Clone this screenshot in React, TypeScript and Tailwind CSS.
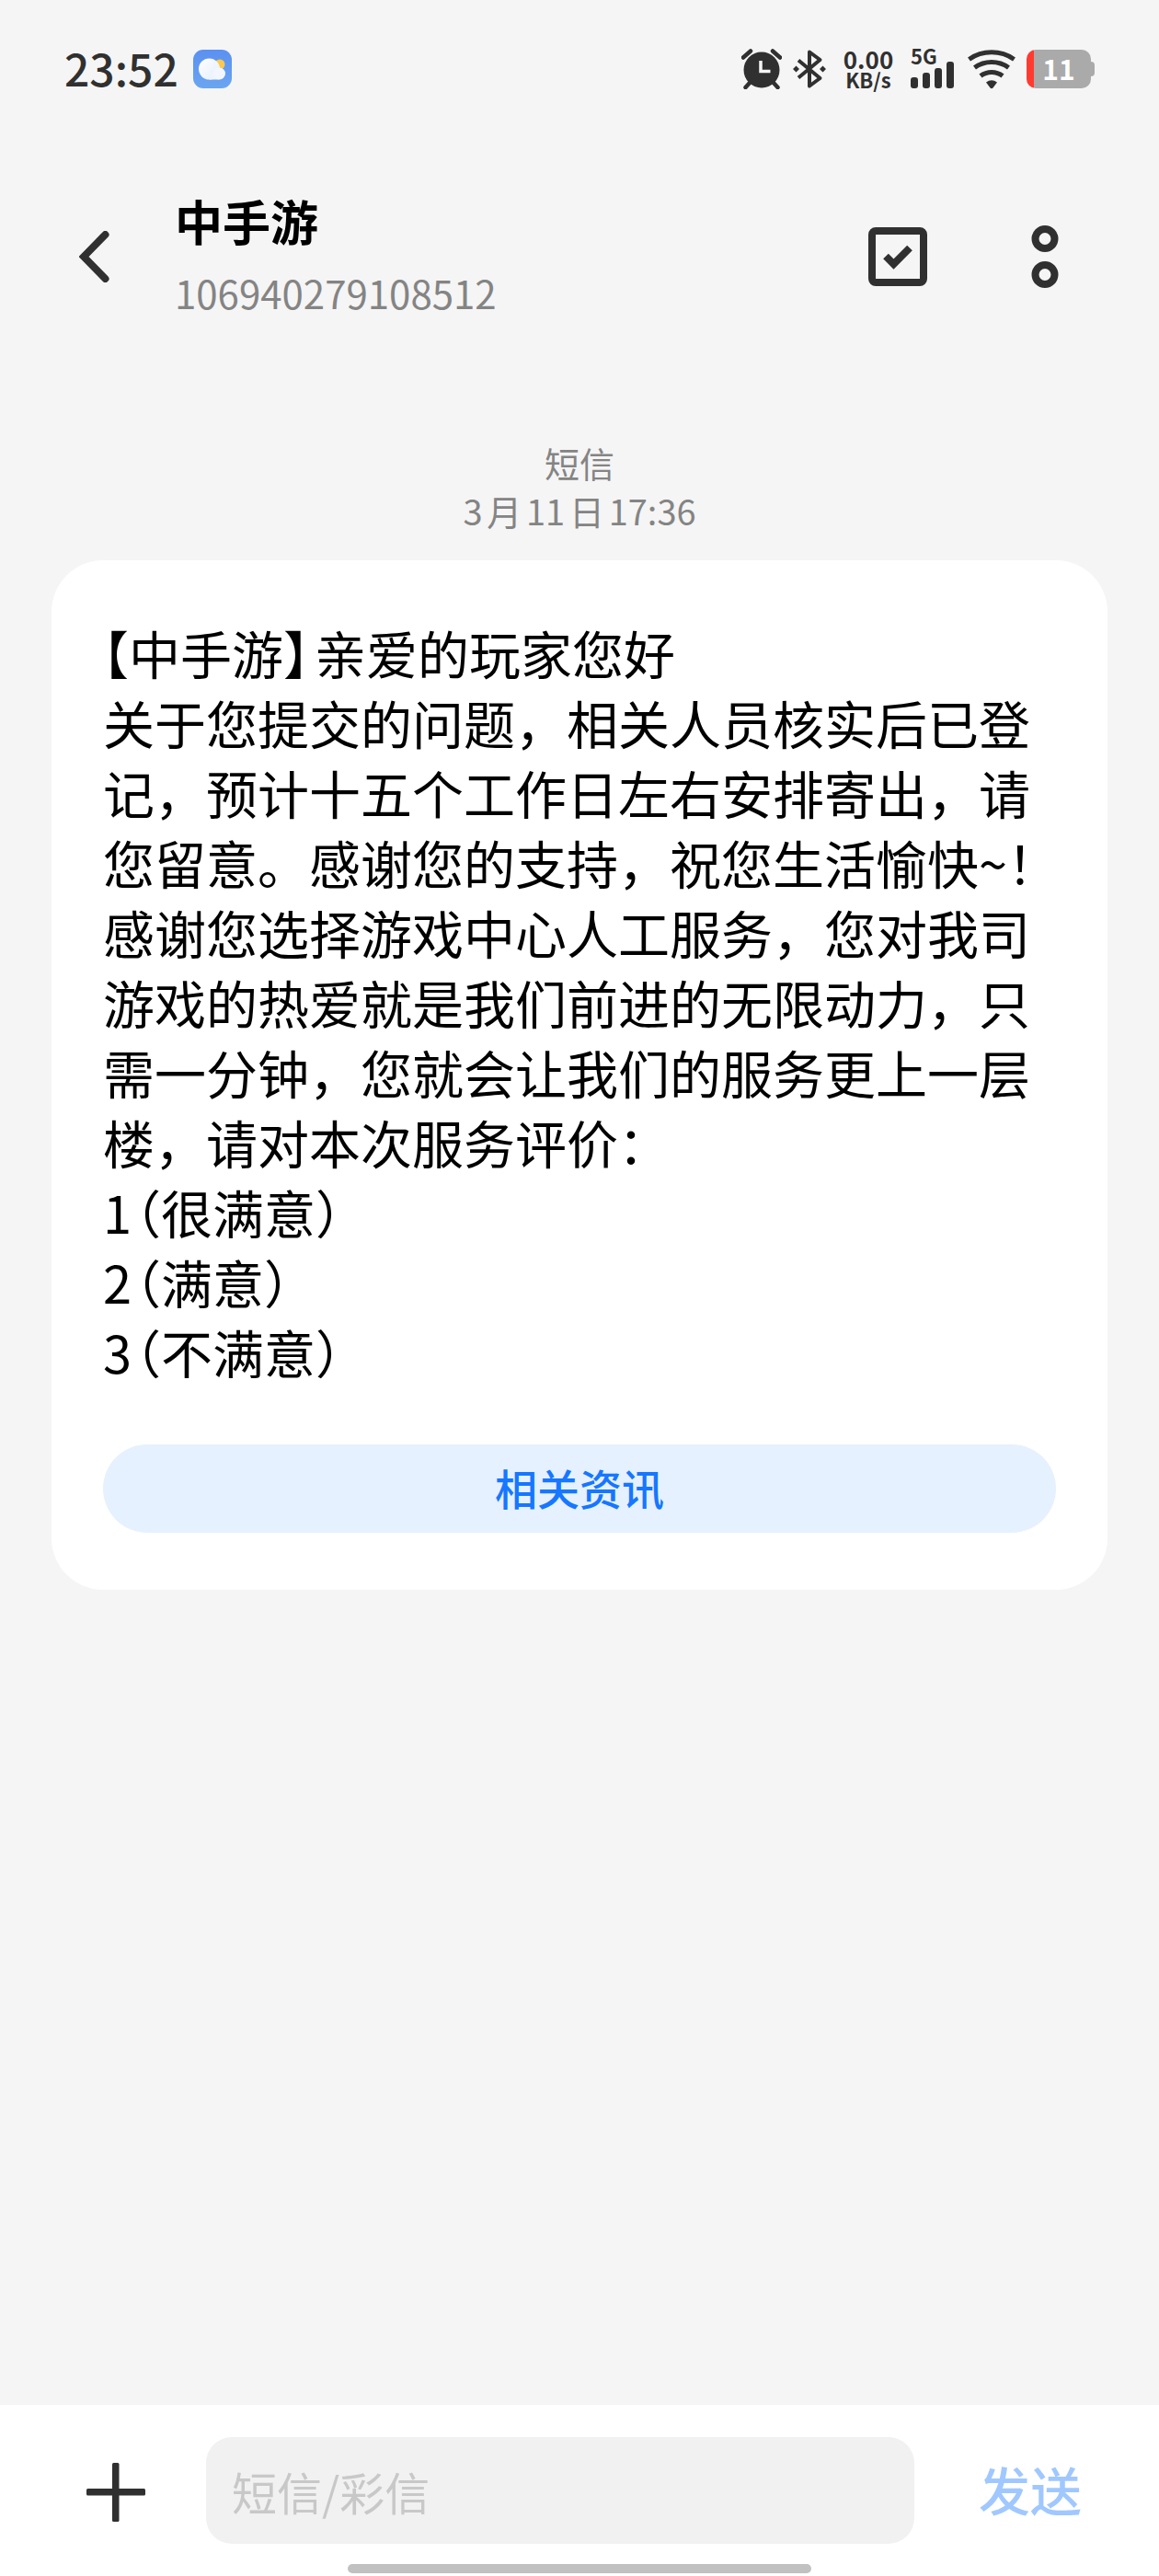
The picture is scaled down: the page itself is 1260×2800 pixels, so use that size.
import type { ReactNode } from 'react';

const messageLines = [
  '关于您提交的问题，相关人员核实后已登记，预计十五个工作日左右安排寄出，请您留意。感谢您的支持，祝您生活愉快~！',
  '感谢您选择游戏中心人工服务，您对我司游戏的热爱就是我们前进的无限动力，只需一分钟，您就会让我们的服务更上一层楼，请对本次服务评价：',
];

const ratings = [
  { value: '1', label: '很满意' },
  { value: '2', label: '满意' },
  { value: '3', label: '不满意' },
];

// half-width punctuation, so brackets don't take a whole cell
const Half = ({ children }: { children: ReactNode }) => (
  <span className="[font-feature-settings:'halt']">{children}</span>
);

const WeatherIcon = () => (
  <svg width="42" height="42" viewBox="0 0 42 42" aria-hidden="true">
    <defs>
      <linearGradient id="sky" x1="0" y1="0" x2="0" y2="1">
        <stop offset="0" stopColor="#5b90f0" />
        <stop offset="1" stopColor="#6aa5f0" />
      </linearGradient>
      <linearGradient id="cloud" x1="0" y1="0" x2="1" y2="1">
        <stop offset="0" stopColor="#ffffff" />
        <stop offset="1" stopColor="#e3eefd" />
      </linearGradient>
    </defs>
    <rect width="42" height="42" rx="11" fill="url(#sky)" />
    <circle cx="29" cy="16" r="5.5" fill="#fbc94e" />
    <circle cx="17.500" cy="21" r="11.500" fill="url(#cloud)" />
    <path d="M17.500 22h11v10.500h-11z" fill="#eef4fe" />
    <circle cx="28.500" cy="26" r="6.500" fill="#f2f7ff" />
  </svg>
);

const AlarmIcon = () => (
  <svg width="44" height="44" viewBox="0 0 44 44" fill="none" stroke="#303030" aria-hidden="true">
    <circle cx="22" cy="23" r="19.5" fill="#303030" stroke="none" />
    <path d="M2 9.500L10 2.500M42 9.500L34 2.500M4.500 42L9 37M39.500 42L35 37" strokeWidth="4.500" strokeLinecap="round" />
    <path d="M21 13v11.500h10.500" stroke="#f5f5f5" strokeWidth="3.500" />
  </svg>
);

const BluetoothIcon = () => (
  <svg width="36" height="44" viewBox="0 0 36 44" fill="none" stroke="#303030" aria-hidden="true">
    <path d="M6 12.500L29.500 32 18 40.500V3.500L29.500 12 6 31.500" strokeWidth="4" strokeLinejoin="round" />
    <path d="M3.500 18.500L7 22l-3.500 3.500L0 22zM32.500 18.500L36 22l-3.500 3.500L29 22z" fill="#303030" stroke="none" />
  </svg>
);

const SignalBars = () => (
  <svg width="48" height="29" viewBox="0 0 48 29" fill="#303030" aria-hidden="true">
    <rect x="0" y="17" width="8" height="12" rx="3" />
    <rect x="13" y="12" width="8" height="17" rx="3" />
    <rect x="26" y="7" width="8" height="22" rx="3" />
    <rect x="39" y="0" width="8" height="29" rx="3" />
  </svg>
);

const WifiIcon = () => (
  <svg width="52" height="43" viewBox="0 0 52 43" fill="none" stroke="#303030" strokeWidth="5" aria-hidden="true">
    <path d="M1.500 10.500C16 .300 36 .300 50.500 10.500" />
    <path d="M7.500 19.500C18.500 11.500 33.500 11.500 44.500 19.500" />
    <path d="M14 28.500C21 23 31 23 38 28.500" />
    <path d="M20 35.500Q26 31 32 35.500L27.500 41.500Q26 43 24.500 41.500z" fill="#303030" stroke="none" />
  </svg>
);

const Battery = () => (
  <div className="flex items-center" aria-label="电量 11%">
    <div className="flex h-[42px] w-[70px] items-center justify-center rounded-[10px] bg-[linear-gradient(to_right,#ff3b30_8px,#aaaaaa_8px)] pb-0.5 text-[30px] leading-none font-bold text-white">
      11
    </div>
    <div className="h-4 w-1 rounded-r-sm bg-[#aaaaaa]" />
  </div>
);

const StatusBar = () => (
  <div className="flex h-[150px] items-center px-[70px] text-[#303030]">
    <span className="pb-1 text-[48px] leading-none font-medium">23:52</span>
    <span className="ml-4">
      <WeatherIcon />
    </span>
    <div className="ml-auto flex items-center gap-3">
      <AlarmIcon />
      <BluetoothIcon />
      <div className="mx-2 flex w-[52px] flex-col items-center pb-0.5 font-bold">
        <span className="text-[26px] leading-6">0.00</span>
        <span className="text-[22px] leading-5">KB/s</span>
      </div>
      <div className="relative flex h-[42px] w-[50px] items-end">
        <span className="absolute -top-1 left-0 text-[22px] leading-5 font-bold">5G</span>
        <SignalBars />
      </div>
      <WifiIcon />
      <Battery />
    </div>
  </div>
);

const Header = () => (
  <header className="flex h-[258px] items-center pr-[92px] pl-[70px]">
    <button type="button" aria-label="返回" className="flex h-20 w-[120px] items-center pl-4">
      <svg width="34" height="56" viewBox="0 0 34 56" fill="none" stroke="#303030" strokeWidth="8" aria-hidden="true">
        <path d="M28.500 4L5 28l23.500 24" strokeLinecap="round" />
      </svg>
    </button>
    <div className="min-w-0 flex-1">
      <h1 className="text-[52px] leading-[78px] font-bold">中手游</h1>
      <p className="text-[42px] leading-[78px] text-[#848484]">106940279108512</p>
    </div>
    <button type="button" aria-label="选择" className="mr-24">
      <svg width="64" height="64" viewBox="0 0 64 64" fill="none" stroke="#303030" strokeWidth="8" aria-hidden="true">
        <rect x="4" y="4" width="56" height="56" rx="4" />
        <path d="M19 31.500l8.500 8.500L45 22.500" />
      </svg>
    </button>
    <button type="button" aria-label="更多" className="flex w-16 justify-center">
      <svg width="30" height="68" viewBox="0 0 30 68" fill="none" stroke="#303030" strokeWidth="8" aria-hidden="true">
        <circle cx="15" cy="14.500" r="10.500" />
        <circle cx="15" cy="53.500" r="10.500" />
      </svg>
    </button>
  </header>
);

const Message = () => (
  <article className="mx-14 mt-7 rounded-[56px] bg-white pt-[62px] pb-[62px]">
    <div className="pr-[50px] pl-14 text-[56px] leading-[76px]">
      <p>
        <Half>【</Half>中手游<Half>】</Half>
        <span className="ml-1.5">亲爱的玩家您好</span>
      </p>
      {messageLines.map((line) => (
        <p key={line}>{line}</p>
      ))}
      {ratings.map((rating) => (
        <p key={rating.value}>
          <span className="mr-1">{rating.value}</span>
          <Half>（</Half>
          {rating.label}
          <Half>）</Half>
        </p>
      ))}
    </div>
    <div className="mt-[63px] px-14">
      <button type="button" className="h-24 w-full rounded-full bg-[#e5f1fe] pb-1 text-[46px] leading-none font-medium text-[#1677ff]">
        相关资讯
      </button>
    </div>
  </article>
);

const Composer = () => (
  <footer className="bg-white pt-[35px] pb-[3px]">
    <form className="flex items-center" onSubmit={(e) => e.preventDefault()}>
      <button type="button" aria-label="添加" className="flex w-[224px] shrink-0 pt-1 pl-[94px]">
        <svg width="64" height="64" viewBox="0 0 64 64" fill="#303030" aria-hidden="true">
          <rect x="0" y="28" width="64" height="7.500" rx="1.500" />
          <rect x="28" y="0" width="7.500" height="64" rx="1.500" />
        </svg>
      </button>
      <input
        type="text"
        aria-label="短信/彩信"
        placeholder="短信/彩信"
        className="h-[116px] min-w-0 flex-1 rounded-[28px] bg-[#f1f1f1] px-7 text-[49px] outline-none placeholder:text-[#c8c8c8]"
      />
      <button type="submit" className="shrink-0 pr-[84px] pb-1 pl-[70px] text-[56px] leading-none font-medium text-[#a0c8ff]">
        发送
      </button>
    </form>
    <div className="mx-auto mt-[22px] h-2.5 w-2/5 rounded-full bg-[#c1c1c1]" />
  </footer>
);

const App = () => {
  return (
    <div
      lang="zh-CN"
      className="flex min-h-screen flex-col bg-[#f5f5f5] font-['Noto_Sans_CJK_SC',sans-serif] text-black"
    >
      <StatusBar />
      <Header />
      <main className="flex-1">
        <div className="pt-[69px] text-center text-[38px] leading-[52px] text-[#848484]">
          <p>短信</p>
          <p className="[text-autospace:normal]">3月11日17:36</p>
        </div>
        <Message />
      </main>
      <Composer />
    </div>
  );
};

export default App;
